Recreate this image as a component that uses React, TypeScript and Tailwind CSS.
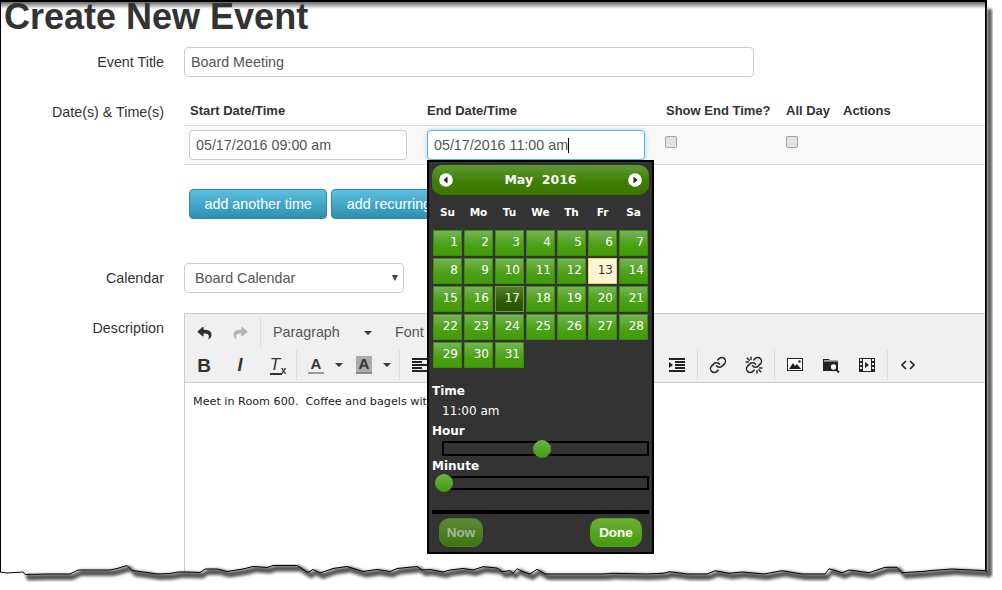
import React from "react";
import { FaReply, FaShare } from "react-icons/fa";

// x,y points along the torn bottom edge of the screenshot
const edge: [number, number][] = [
  [0, 572], [7, 573], [23, 572], [25, 574.5], [48, 574], [70, 574], [78, 570], [110, 570], [117, 568.5], [127, 565.5],
  [132, 570.5], [147, 572.5], [157, 574], [170, 573.5], [178, 572], [187, 572], [200, 572.5], [205, 569], [217, 569],
  [227, 571.5], [243, 569], [253, 566.5], [267, 567.5], [273, 565.5], [297, 565.5], [308, 572.5], [313, 569.5], [320, 573],
  [333, 568.5], [347, 566.5], [363, 571.5], [377, 569.5], [390, 571.5], [397, 568.5], [417, 566.5], [422, 570], [430, 569.5],
  [443, 572], [450, 570], [463, 568.5], [473, 570], [483, 566.7], [497, 568], [502, 571.7], [510, 570.7], [513, 573.3],
  [517, 568.7], [522, 571.3], [530, 574], [537, 569.3], [545, 574], [557, 574], [603, 574], [612, 573.3], [647, 574],
  [663, 573.3], [670, 571.7], [687, 574], [707, 574], [715, 570.7], [729, 573.3], [742, 572], [764, 574], [782, 570.7],
  [802, 574], [825, 574], [829, 568.7], [842, 572.7], [849, 570], [869, 572.7], [885, 567.3], [897, 567.3], [902, 572.7],
  [925, 571.3], [929, 570.7], [952, 569], [985, 570.7], [987, 572],
];

function TornEdge() {
  const line = edge.map(([x, y]) => `${x},${y}`).join(" ");
  const shadowTop = edge.filter(([x]) => x > 8).map(([x, y]) => `${x + 3},${y}`);
  const shadowBottom = edge.filter(([x]) => x > 8).map(([x, y]) => `${x + 3},${y + 6}`).reverse();
  return (
    <svg className="absolute inset-0 pointer-events-none" width="1002" height="590" viewBox="0 0 1002 590">
      <defs>
        <filter id="soft" x="-5%" y="-5%" width="110%" height="110%">
          <feGaussianBlur stdDeviation="1.4" />
        </filter>
      </defs>
      <polygon points={`${line} 1002,572 1002,590 0,590`} fill="#fff" />
      <polygon points={[...shadowTop, ...shadowBottom].join(" ")} fill="#555" filter="url(#soft)" />
      <rect x="987" y="9" width="5" height="567" fill="#555" filter="url(#soft)" />
      <polyline points={line} fill="none" stroke="#000" strokeWidth="1" />
    </svg>
  );
}

function Row({ label, children, className }: { label: string; children: React.ReactNode; className?: string }) {
  return (
    <div className={`flex ${className ?? ""}`}>
      <div className="w-[163px] shrink-0 text-right text-[14.3px] leading-[30px] text-[#333]">{label}</div>
      <div className="ml-[20px] flex-1 min-w-0">{children}</div>
    </div>
  );
}

function TextBox({ children, focused }: { children: React.ReactNode; focused?: boolean }) {
  return (
    <div
      className={`w-[218px] h-[30px] rounded-[4px] border bg-white px-[6px] text-[14.3px] leading-[28px] text-[#555] ${
        focused ? "border-[#66afe9] shadow-[0_0_4px_rgba(102,175,233,0.6)]" : "border-[#ccc]"
      }`}
    >
      {children}
    </div>
  );
}

function CheckBox() {
  return <div className="w-[12px] h-[12px] rounded-[2px] border border-[#a5a5a5] bg-[#e2e2e2]" />;
}

function AddButton({ children }: { children: React.ReactNode }) {
  return (
    <div className="h-[30px] px-[14.5px] shrink-0 rounded-[4px] border border-[#2f8aa8] bg-[linear-gradient(#5bc0de,#2f8fb0)] text-[14.3px] leading-[28px] text-white">
      {children}
    </div>
  );
}

function Sep() {
  return <div className="w-px h-[30px] mx-[2px] bg-[#ddd] shrink-0" />;
}

function Btn({ children }: { children?: React.ReactNode }) {
  return <div className="w-[36px] h-[30px] shrink-0 flex items-center justify-center text-[#333]">{children}</div>;
}

function Caret({ className }: { className?: string }) {
  return <div className={`w-0 h-0 border-x-[4px] border-x-transparent border-t-[4px] border-t-[#333] ${className ?? ""}`} />;
}

function Lines({ widths }: { widths: number[] }) {
  return (
    <svg width="16" height="14" viewBox="0 0 16 14" fill="#222">
      {widths.map((w, i) => (
        <rect key={i} x="0" y={i * 3} width={w} height="2" />
      ))}
    </svg>
  );
}

function ChainIcon({ broken }: { broken?: boolean }) {
  return (
    <svg width="18" height="18" viewBox="0 0 24 24" fill="none" stroke="#2a2a2a" strokeWidth="2" strokeLinecap="round">
      <path d="M10 13a5 5 0 0 0 7.54.54l3-3a5 5 0 0 0-7.07-7.07l-1.72 1.71" />
      <path d="M14 11a5 5 0 0 0-7.54-.54l-3 3a5 5 0 0 0 7.07 7.07l1.71-1.71" />
      {broken && <path d="M8 1.5v3M1.5 8h3M16 19.5v3M19.5 16h3M3 3l2.5 2.5M18.5 18.5L21 21" />}
    </svg>
  );
}

function Toolbar() {
  return (
    <div className="bg-[#f0f0f0] border-b border-[#cfcfcf] h-[69px] pl-px">
      <div className="flex items-center h-[36px] pt-[2px]">
        <Btn><FaReply className="w-[15px] h-[14px] text-[#333]" /></Btn>
        <Btn><FaShare className="w-[15px] h-[14px] text-[#b5b5b5]" /></Btn>
        <Sep />
        <div className="w-[122px] shrink-0 flex items-center pl-[10px] text-[14.3px] text-[#555]">
          Paragraph
          <Caret className="ml-[24px]" />
        </div>
        <div className="pl-[10px] text-[14.3px] text-[#555]">Font</div>
      </div>
      <div className="flex items-center h-[30px]">
        <Btn><span className="text-[19px] font-bold leading-none">B</span></Btn>
        <Btn><span className="text-[18px] font-bold italic leading-none">I</span></Btn>
        <Btn>
          <span className="relative text-[17px] italic leading-none border-b-2 border-[#333] pr-[2px]">
            T
            <span className="absolute left-[11px] bottom-[-3px] text-[10px] not-italic font-bold">x</span>
          </span>
        </Btn>
        <Sep />
        <div className="w-[50px] shrink-0 flex items-center pl-[9px]">
          <span className="w-[16px] text-center text-[15px] leading-[16px] font-bold text-[#333] border-b-2 border-[#999]">A</span>
          <Caret className="ml-[11px]" />
        </div>
        <div className="w-[48px] shrink-0 flex items-center pl-[7px]">
          <span className="w-[16px] text-center text-[15px] leading-[16px] font-bold text-[#333] bg-[#aaa] border-b-2 border-[#888]">A</span>
          <Caret className="ml-[11px]" />
        </div>
        <Sep />
        <Btn><Lines widths={[16, 10, 16, 10, 16]} /></Btn>
        <Btn /><Btn /><Btn />
        <Sep />
        <Btn /><Btn /><Btn />
        <Btn>
          <svg width="16" height="14" viewBox="0 0 16 14" fill="#222">
            <rect x="0" y="0" width="16" height="2" />
            <rect x="6" y="3" width="10" height="2" />
            <rect x="6" y="6" width="10" height="2" />
            <rect x="6" y="9" width="10" height="2" />
            <rect x="0" y="12" width="16" height="2" />
            <polygon points="0,4 4,7 0,10" />
          </svg>
        </Btn>
        <Sep />
        <Btn><ChainIcon /></Btn>
        <Btn><ChainIcon broken /></Btn>
        <Sep />
        <Btn>
          <svg width="16" height="14" viewBox="0 0 16 14">
            <rect x="0.5" y="0.5" width="15" height="12" fill="#fff" stroke="#222" />
            <polygon points="2,11 6,5 8,8 10,6 14,11" fill="#222" />
            <circle cx="12.5" cy="3.5" r="1.2" fill="#222" />
          </svg>
        </Btn>
        <Btn>
          <svg width="17" height="15" viewBox="0 0 17 15">
            <path d="M0 1h6l1 1h8v11H0z" fill="#222" />
            <rect x="1" y="2.4" width="14" height="1" fill="#fff" />
            <circle cx="10.5" cy="9" r="3.4" fill="#fff" stroke="#222" strokeWidth="1.5" />
            <path d="M13 11.5l3 3" stroke="#222" strokeWidth="2" />
          </svg>
        </Btn>
        <Btn>
          <svg width="16" height="14" viewBox="0 0 16 14" fill="#222">
            <path fillRule="evenodd" d="M0 0h16v14H0zM1 1v2h2V1zM13 1v2h2V1zM1 5v2h2V5zM13 5v2h2V5zM1 9v2h2V9zM13 9v2h2V9zM4 1v12h8V1z" />
            <polygon points="6,4 10,7 6,10" />
          </svg>
        </Btn>
        <Sep />
        <Btn>
          <svg width="14" height="10" viewBox="0 0 14 10" fill="none" stroke="#222" strokeWidth="1.6">
            <path d="M5 1L1 5l4 4M9 1l4 4-4 4" />
          </svg>
        </Btn>
      </div>
    </div>
  );
}

function RoundArrow({ dir }: { dir: "left" | "right" }) {
  return (
    <svg width="14" height="14" viewBox="0 0 14 14">
      <circle cx="7" cy="7" r="6.8" fill="#fff" />
      <polygon points={dir === "left" ? "8.5,3.5 4.5,7 8.5,10.5" : "5.5,3.5 9.5,7 5.5,10.5"} fill="#222" />
    </svg>
  );
}

function Slider({ left, className }: { left: string; className: string }) {
  return (
    <div className={`relative ml-[10px] w-[207px] border-2 border-black ${className}`}>
      <div className={`absolute top-1/2 -translate-y-1/2 w-[18px] h-[18px] rounded-full bg-[linear-gradient(#70b245,#429a0a)] ${left}`} />
    </div>
  );
}

function DatePicker() {
  const names = ["Su", "Mo", "Tu", "We", "Th", "Fr", "Sa"];
  const days = Array.from({ length: 31 }, (_, i) => i + 1);
  return (
    <div className="absolute left-[427px] top-[160px] w-[227px] h-[394px] border-2 border-black bg-[#333] px-[3px] pt-[3px] font-['DejaVu_Sans',sans-serif] text-white">
      <div className="h-[30px] rounded-[10px] bg-[linear-gradient(#5f9a35,#3f7f05_55%,#3a7600)] flex items-center justify-between px-[7px]">
        <RoundArrow dir="left" />
        <div className="text-[12.5px] font-bold whitespace-pre">May  2016</div>
        <RoundArrow dir="right" />
      </div>
      <div className="grid grid-cols-[repeat(7,29px)] gap-x-[2px] ml-px mt-[7px] h-[20px] text-[10.5px] font-bold leading-[20px] text-center">
        {names.map((n) => (
          <div key={n}>{n}</div>
        ))}
      </div>
      <div className="grid grid-cols-[repeat(7,29px)] auto-rows-[26px] gap-[2px] ml-px mt-[8px]">
        {days.map((d) => (
          <div
            key={d}
            className={`border text-right pr-[3px] text-[12px] leading-[23px] ${
              d === 13
                ? "bg-[#fff6d6] border-[#f5cf55] text-[#363636]"
                : d === 17
                  ? "bg-[linear-gradient(#55812f,#2d5c00_60%,#265500)] border-[#6ba32f]"
                  : "bg-[linear-gradient(#74b456,#4aa012_60%,#429b0a)] border-[#3f8c0c]"
            }`}
          >
            {d}
          </div>
        ))}
      </div>
      <div className="mt-[15px] text-[12px] font-bold leading-[16px]">Time</div>
      <div className="mt-[4px] ml-[10px] text-[12px] leading-[16px]">11:00 am</div>
      <div className="mt-[4px] text-[12px] font-bold leading-[16px]">Hour</div>
      <Slider className="mt-[2px] h-[15px]" left="left-[89px]" />
      <div className="mt-[2px] text-[12px] font-bold leading-[16px]">Minute</div>
      <Slider className="mt-[2px] h-[14px]" left="left-[-9px]" />
      <div className="mt-[20px] h-[4px] bg-black" />
      <div className="mt-[4px] flex justify-between px-[7px] font-['Liberation_Sans',sans-serif] text-[13.5px] font-bold leading-[27px]">
        <div className="w-[44px] h-[29px] rounded-[10px] text-center border border-[#4d7f28] bg-[linear-gradient(#5c8a39,#3f7410)] text-[#a8b89c]">Now</div>
        <div className="w-[52px] h-[29px] rounded-[10px] text-center border border-[#54a51a] bg-[linear-gradient(#6cb035,#44990a)]">Done</div>
      </div>
    </div>
  );
}

export default function App() {
  return (
    <div className="relative w-[1002px] h-[590px] overflow-hidden bg-white font-['Liberation_Sans',Arial,sans-serif]">
      <div className="w-[987px] h-[590px] flex flex-col border-l border-t-2 border-r-2 border-black bg-[linear-gradient(#666,#fff_7px)]">
        <h1 className="h-[45px] pl-[3px] text-[36px] font-bold leading-[29px] text-[#333]">Create New Event</h1>

        <Row label="Event Title">
          <div className="w-[570px] h-[30px] rounded-[4px] border border-[#ccc] px-[6px] text-[14.3px] leading-[28px] text-[#555]">
            Board Meeting
          </div>
        </Row>

        <Row label="Date(s) & Time(s)" className="mt-[20px]">
          <div className="flex h-[28px] pt-[4px] text-[13px] font-bold leading-[20px] text-[#333]">
            <div className="w-[243px] pl-[6px]">Start Date/Time</div>
            <div className="w-[239px]">End Date/Time</div>
            <div className="w-[120px]">Show End Time?</div>
            <div className="w-[57px]">All Day</div>
            <div>Actions</div>
          </div>
          <div className="flex h-[40px] items-start pt-[4px] border-y border-[#ddd] bg-[#f9f9f9]">
            <div className="w-[243px] pl-[5px]"><TextBox>05/17/2016 09:00 am</TextBox></div>
            <div className="w-[238px]">
              <TextBox focused>05/17/2016 11:00 am<span className="inline-block w-px h-[15px] bg-black align-[-3px]" /></TextBox>
            </div>
            <div className="w-[121px] pt-[6px]"><CheckBox /></div>
            <div className="pt-[6px]"><CheckBox /></div>
          </div>
          <div className="flex gap-[4px] mt-[24px] pl-[5px]">
            <AddButton>add another time</AddButton>
            <AddButton>add recurring</AddButton>
          </div>
        </Row>

        <Row label="Calendar" className="mt-[44px]">
          <div className="relative w-[220px] h-[30px] rounded-[4px] border border-[#ccc] pl-[10px] text-[14.3px] leading-[28px] text-[#555]">
            Board Calendar
            <div className="absolute right-[5px] top-[11px] w-0 h-0 border-x-[3.5px] border-x-transparent border-t-[6px] border-t-[#444]" />
          </div>
        </Row>

        <Row label="Description" className="mt-[20px] flex-1">
          <div className="h-full border-l border-t border-[#ccc]">
            <Toolbar />
            <div className="pl-[8px] pt-[12px] font-['DejaVu_Sans',sans-serif] text-[11.2px] leading-[14px] text-[#222] whitespace-pre">
              Meet in Room 600.  Coffee and bagels with
            </div>
          </div>
        </Row>
      </div>

      <DatePicker />
      <TornEdge />
    </div>
  );
}
